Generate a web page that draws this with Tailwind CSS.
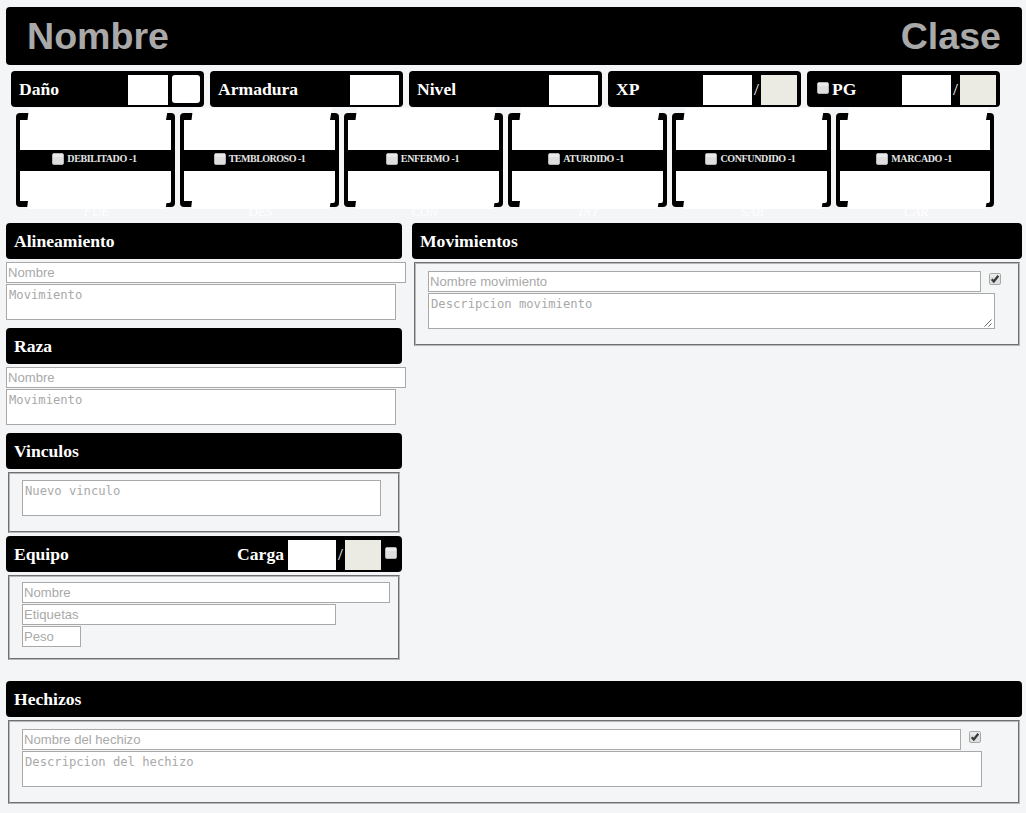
<!DOCTYPE html>
<html lang="es">
<head>
<meta charset="utf-8">
<title>Hoja de personaje</title>
<script src="https://cdn.jsdelivr.net/npm/@tailwindcss/browser@4"></script>
</head>
<body class="bg-[#f4f5f7] w-[1026px] h-[813px] overflow-hidden pl-[6px] pr-1 pt-[7px] font-['Liberation_Serif',serif] text-[17.6px] leading-[20px] text-white">
<svg class="hidden">
  <defs>
    <symbol id="box" viewBox="0 0 12 12"><rect x=".5" y=".5" width="11" height="11" rx="1.5" fill="#dedede" stroke="#b4b4b4"/><path d="M1 1H11V4H1Z" fill="#eaeaea"/></symbol>
    <symbol id="checked" viewBox="0 0 12 12"><rect x=".5" y=".5" width="11" height="11" rx="1.5" fill="#dedede" stroke="#a8a8a8"/><path d="M1 1H11V4H1Z" fill="#eaeaea"/><path d="M2.7 6.2 4.8 8.5 9.3 2.800" fill="none" stroke="#383838" stroke-width="2.2"/></symbol>
    <symbol id="frame" viewBox="0 0 159 101"><rect y="5" width="159" height="94" rx="4" fill="#000"/><path fill="#fff" d="M13 0H152L150 12H155V42H4V12H11.5ZM4 63H155V93Q155 95 153 95H150.500L149.500 101H11L12 93H4Z"/></symbol>
    <symbol id="frame-last" viewBox="0 0 158 101"><rect y="5" width="158" height="94" rx="4" fill="#000"/><path fill="#fff" d="M13 0H152L150 12H154V42H4V12H11.5ZM4 63H154V93Q154 95 152 95H150.500L149.500 101H11L12 93H4Z"/></symbol>
  </defs>
</svg>

<header class="flex h-[58px] items-center justify-between rounded bg-black pl-[21px] pr-[21px] font-['Liberation_Sans',sans-serif] text-[37.6px] font-bold leading-[44px] text-[#a9a9a9]">
  <span>Nombre</span><span>Clase</span>
</header>

<section class="mt-[6px] ml-[5px] flex gap-[6px] font-bold">
  <div class="flex h-9 w-[193px] rounded bg-black pl-2 pr-1 pt-1"><span class="mt-[4px]">Daño</span><div class="ml-auto h-[30px] w-10 bg-white"></div><div class="ml-1 h-[28px] w-[28px] rounded-[3px] bg-white"></div></div>
  <div class="flex h-9 w-[193px] rounded bg-black pl-2 pr-1 pt-1"><span class="mt-[4px]">Armadura</span><div class="ml-auto h-[30px] w-[49px] bg-white"></div></div>
  <div class="flex h-9 w-[193px] rounded bg-black pl-2 pr-1 pt-1"><span class="mt-[4px]">Nivel</span><div class="ml-auto h-[30px] w-[49px] bg-white"></div></div>
  <div class="flex h-9 w-[193px] rounded bg-black pl-2 pr-1 pt-1"><span class="mt-[4px]">XP</span><div class="ml-auto h-[30px] w-[49px] bg-white"></div><span class="mt-[4px] w-[9px] text-center font-normal">/</span><div class="h-[30px] w-9 bg-[#ebebe4]"></div></div>
  <div class="flex h-9 w-[193px] rounded bg-black pl-[10px] pr-1 pt-1"><svg class="mt-[7px] mr-[3px] size-3"><use href="#box"/></svg><span class="mt-[4px]">PG</span><div class="ml-auto h-[30px] w-[49px] bg-white"></div><span class="mt-[4px] w-[9px] text-center font-normal">/</span><div class="h-[30px] w-9 bg-[#ebebe4]"></div></div>
</section>

<section class="mt-px ml-[10px] flex h-[115px] gap-[5px] text-[10px] font-bold leading-[12px] text-[#e4e4e4]">
  <div class="relative h-[101px] w-[159px]"><em class="absolute left-px top-[97px] w-full text-center text-[13px] font-normal leading-[14px] text-white">FUE</em><svg class="absolute inset-0 h-[101px] w-[159px]"><use href="#frame"/></svg><div class="relative flex justify-center gap-[3px] pt-[45px] pr-[2px]"><svg class="size-3"><use href="#box"/></svg><span class="tracking-[-0.36px]">DEBILITADO -1</span></div></div>
  <div class="relative h-[101px] w-[159px]"><em class="absolute left-px top-[97px] w-full text-center text-[13px] font-normal leading-[14px] text-white">DES</em><svg class="absolute inset-0 h-[101px] w-[159px]"><use href="#frame"/></svg><div class="relative flex justify-center gap-[3px] pt-[45px]"><svg class="size-3"><use href="#box"/></svg><span class="tracking-[-0.5px]">TEMBLOROSO -1</span></div></div>
  <div class="relative h-[101px] w-[159px]"><em class="absolute left-px top-[97px] w-full text-center text-[13px] font-normal leading-[14px] text-white">CON</em><svg class="absolute inset-0 h-[101px] w-[159px]"><use href="#frame"/></svg><div class="relative flex justify-center gap-[3px] pt-[45px] pr-[2px]"><svg class="size-3"><use href="#box"/></svg><span class="tracking-[-0.36px]">ENFERMO -1</span></div></div>
  <div class="relative h-[101px] w-[159px]"><em class="absolute left-px top-[97px] w-full text-center text-[13px] font-normal leading-[14px] text-white">INT</em><svg class="absolute inset-0 h-[101px] w-[159px]"><use href="#frame"/></svg><div class="relative flex justify-center gap-[3px] pt-[45px] pr-[3px]"><svg class="size-3"><use href="#box"/></svg><span class="tracking-[-0.36px]">ATURDIDO -1</span></div></div>
  <div class="relative h-[101px] w-[159px]"><em class="absolute left-px top-[97px] w-full text-center text-[13px] font-normal leading-[14px] text-white">SAB</em><svg class="absolute inset-0 h-[101px] w-[159px]"><use href="#frame"/></svg><div class="relative flex justify-center gap-[3px] pt-[45px] pr-[2px]"><svg class="size-3"><use href="#box"/></svg><span class="tracking-[-0.36px]">CONFUNDIDO -1</span></div></div>
  <div class="relative h-[101px] w-[158px]"><em class="absolute left-px top-[97px] w-full text-center text-[13px] font-normal leading-[14px] text-white">CAR</em><svg class="absolute inset-0 h-[101px] w-[158px]"><use href="#frame-last"/></svg><div class="relative flex justify-center gap-[3px] pt-[45px] pr-[2px]"><svg class="size-3"><use href="#box"/></svg><span class="tracking-[-0.36px]">MARCADO -1</span></div></div>
</section>

<main class="flex h-[458px] gap-[10px]">
  <div class="w-[396px]">
    <h2 class="h-9 rounded bg-black px-2 pt-2 font-bold">Alineamiento</h2>
    <div class="mt-[3px] h-[21px] w-[400px] border border-[#a9a9a9] bg-white px-px font-['Liberation_Sans',sans-serif] text-[13.1px] leading-[19px] text-[#a9a9a9]">Nombre</div>
    <div class="mt-px h-9 w-[390px] border border-[#a9a9a9] bg-white px-[2px] pt-[2px] font-['DejaVu_Sans_Mono',monospace] text-[12.18px] leading-[16px] text-[#a9a9a9]">Movimiento</div>
    <h2 class="mt-2 h-9 rounded bg-black px-2 pt-2 font-bold">Raza</h2>
    <div class="mt-[3px] h-[21px] w-[400px] border border-[#a9a9a9] bg-white px-px font-['Liberation_Sans',sans-serif] text-[13.1px] leading-[19px] text-[#a9a9a9]">Nombre</div>
    <div class="mt-px h-9 w-[390px] border border-[#a9a9a9] bg-white px-[2px] pt-[2px] font-['DejaVu_Sans_Mono',monospace] text-[12.18px] leading-[16px] text-[#a9a9a9]">Movimiento</div>
    <h2 class="mt-2 h-9 rounded bg-black px-2 pt-2 font-bold">Vinculos</h2>
    <div class="mt-[3px] mx-[2px] h-[61px] border border-t-[#707073] border-l-[#707073] border-r-[#b8b8ba] border-b-[#b8b8ba]">
      <div class="h-full border border-t-[#b8b8ba] border-l-[#b8b8ba] border-r-[#707073] border-b-[#707073] pl-3 pt-[6px]">
        <div class="h-9 w-[359px] border border-[#a9a9a9] bg-white px-[2px] pt-[2px] font-['DejaVu_Sans_Mono',monospace] text-[12.18px] leading-[16px] text-[#a9a9a9]">Nuevo vinculo</div>
      </div>
    </div>
    <div class="mt-[3px] flex h-9 rounded bg-black pl-2 pr-[5px] pt-1 font-bold"><h2 class="mt-[4px]">Equipo</h2><span class="mt-[4px] ml-auto mr-1">Carga</span><div class="h-[30px] w-12 bg-white"></div><span class="mt-[4px] w-[9px] text-center font-normal">/</span><div class="h-[30px] w-9 bg-[#ebebe4]"></div><svg class="mt-[7px] ml-1 size-3"><use href="#box"/></svg></div>
    <div class="mt-[3px] mx-[2px] h-[85px] border border-t-[#707073] border-l-[#707073] border-r-[#b8b8ba] border-b-[#b8b8ba]">
      <div class="flex h-full flex-col gap-px border border-t-[#b8b8ba] border-l-[#b8b8ba] border-r-[#707073] border-b-[#707073] pl-3 pt-[5px] font-['Liberation_Sans',sans-serif] text-[13.1px] leading-[19px] text-[#a9a9a9]">
        <div class="h-[21px] w-[368px] border border-[#a9a9a9] bg-white px-px">Nombre</div>
        <div class="h-[21px] w-[314px] border border-[#a9a9a9] bg-white px-px">Etiquetas</div>
        <div class="h-[21px] w-[59px] border border-[#a9a9a9] bg-white px-px">Peso</div>
      </div>
    </div>
  </div>
  <div class="w-[610px]">
    <h2 class="h-9 rounded bg-black px-2 pt-2 font-bold">Movimientos</h2>
    <div class="mt-[3px] mx-[2px] h-[84px] border border-t-[#707073] border-l-[#707073] border-r-[#b8b8ba] border-b-[#b8b8ba]">
      <div class="h-full border border-t-[#b8b8ba] border-l-[#b8b8ba] border-r-[#707073] border-b-[#707073] pl-3 pt-[7px]">
        <div class="flex gap-2"><div class="h-[21px] w-[553px] border border-[#a9a9a9] bg-white px-px font-['Liberation_Sans',sans-serif] text-[13.1px] leading-[19px] text-[#a9a9a9]">Nombre movimiento</div><svg class="mt-[2px] size-3"><use href="#checked"/></svg></div>
        <div class="mt-px flex h-9 w-[567px] justify-between border border-[#a9a9a9] bg-white pl-[2px] pr-[2px] pt-[2px] font-['DejaVu_Sans_Mono',monospace] text-[12.18px] leading-[16px] text-[#a9a9a9]">Descripcion movimiento<svg class="mb-px size-2 self-end" viewBox="0 0 8 8"><path d="M.5 7.500 7.500.5M4.500 7.500 7.500 4.500" stroke="#666" stroke-width="1" fill="none"/></svg></div>
      </div>
    </div>
  </div>
</main>

<section>
  <h2 class="h-9 rounded bg-black px-2 pt-2 font-bold">Hechizos</h2>
  <div class="mt-[3px] mx-[2px] h-[84px] border border-t-[#707073] border-l-[#707073] border-r-[#b8b8ba] border-b-[#b8b8ba]">
    <div class="h-full border border-t-[#b8b8ba] border-l-[#b8b8ba] border-r-[#707073] border-b-[#707073] pl-3 pt-[7px]">
      <div class="flex gap-2"><div class="h-[21px] w-[939px] border border-[#a9a9a9] bg-white px-px font-['Liberation_Sans',sans-serif] text-[13.1px] leading-[19px] text-[#a9a9a9]">Nombre del hechizo</div><svg class="mt-[2px] size-3"><use href="#checked"/></svg></div>
      <div class="mt-px h-9 w-[960px] border border-[#a9a9a9] bg-white px-[2px] pt-[2px] font-['DejaVu_Sans_Mono',monospace] text-[12.18px] leading-[16px] text-[#a9a9a9]">Descripcion del hechizo</div>
    </div>
  </div>
</section>
</body>
</html>
